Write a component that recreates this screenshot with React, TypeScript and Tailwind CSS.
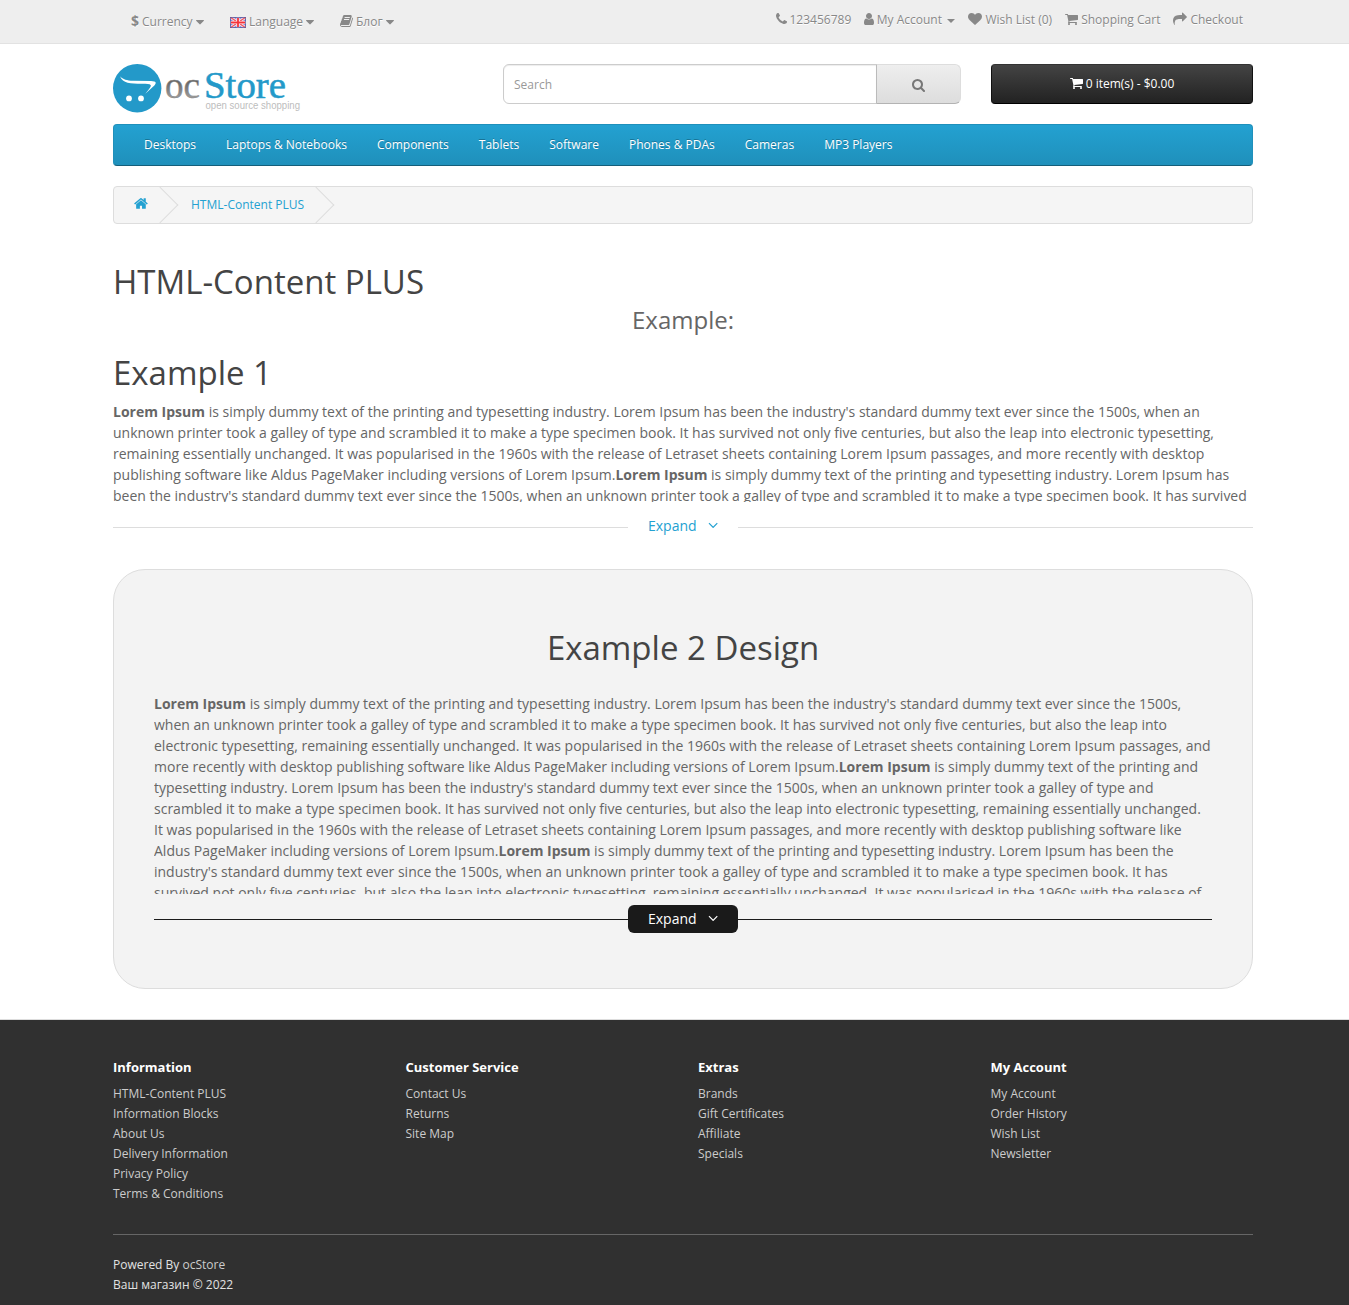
import React from "react";

const ICONS = {
  caret: { w: 1024, d: "M1408 704q0 26-19 45l-448 448q-19 19-45 19t-45-19l-448-448q-19-19-19-45t19-45 45-19h896q26 0 45 19t19 45z" },
  book: { w: 1664, d: "M1703 478q40 57 18 129l-275 906q-19 64-76.5 107.5t-122.5 43.5h-923q-77 0-148.5-53.5t-99.5-131.5q-24-67-2-127 0-4 3-27t4-37q1-8-3-21.5t-3-19.5q2-11 8-21t16.5-23.5 16.5-23.5q23-38 45-91.5t30-91.5q3-10 .5-30t-.5-28q3-11 17-28t17-23q21-36 42-92t25-90q1-9-2.5-32t.5-28q4-13 22-30.5t22-22.5q19-26 42.5-84.5t27.5-96.5q1-8-3-25.5t-2-26.5q2-8 9-18t18-23 17-21q8-12 16.5-30.5t15-35 16-36 19.5-32 26.5-23.5 36-11.5 47.5 5.5l-1 3q38-9 51-9h761q74 0 114 56t18 130l-274 906q-36 119-71.5 153.5t-128.5 34.5h-869q-27 0-38 15-11 16-1 43 24 70 144 70h923q29 0 56-15.5t35-41.5l300-987q7-22 5-57 38 15 59 43zm-1064 2q-4 13 2 22.5t20 9.5h608q13 0 25.5-9.5t16.5-22.5l21-64q4-13-2-22.5t-20-9.5h-608q-13 0-25.5 9.5t-16.5 22.5zm-83 256q-4 13 2 22.5t20 9.5h608q13 0 25.5-9.5t16.5-22.5l21-64q4-13-2-22.5t-20-9.5h-608q-13 0-25.5 9.5t-16.5 22.5z" },
  phone: { w: 1408, d: "M1600 1240q0 27-10 70.5t-21 68.5q-21 50-122 106-94 51-186 51-27 0-53-3.5t-57.5-12.5-47-14.5-55.5-20.5-49-18q-98-35-175-83-127-79-264-216t-216-264q-48-77-83-175-3-9-18-49t-20.5-55.5-14.5-47-12.5-57.5-3.5-53q0-92 51-186 56-101 106-122 25-11 68.5-21t70.5-10q14 0 21 3 18 6 53 76 11 19 30 54t35 63.5 31 53.5q3 4 17.5 25t21.5 35.5 7 28.5q0 20-28.5 50t-62 55-62 53-28.5 46q0 9 5 22.5t8.5 20.5 14 24 11.5 19q76 137 174 235t235 174q2 1 19 11.5t24 14 20.5 8.5 22.5 5q18 0 46-28.5t53-62 55-62 50-28.5q14 0 28.5 7t35.5 21.5 25 17.5q25 15 53.5 31t63.5 35 54 30q70 35 76 53 3 7 3 21z" },
  user: { w: 1280, d: "M1536 1399q0 109-62.5 187t-150.5 78h-854q-88 0-150.5-78t-62.5-187q0-85 8.5-160.5t31.5-152 58.5-131 94-89 134.5-34.5q131 128 313 128t313-128q76 0 134.5 34.5t94 89 58.5 131 31.5 152 8.5 160.5zm-256-887q0 159-112.5 271.5t-271.5 112.5-271.5-112.5-112.5-271.5 112.5-271.5 271.5-112.5 271.5 112.5 112.5 271.5z" },
  heart: { w: 1792, d: "M896 1664q-26 0-44-18l-624-602q-10-8-27.5-26t-55.5-65.5-68-97.5-53.5-121-23.5-138q0-220 127-344t351-124q62 0 126.5 21.5t120 58 95.5 68.5 76 68q36-36 76-68t95.5-68.5 120-58 126.5-21.5q224 0 351 124t127 344q0 221-229 450l-623 600q-18 18-44 18z" },
  cart: { w: 1664, d: "M704 1536q0 52-38 90t-90 38-90-38-38-90 38-90 90-38 90 38 38 90zm896 0q0 52-38 90t-90 38-90-38-38-90 38-90 90-38 90 38 38 90zm128-1088v512q0 24-16.5 42.5t-40.5 21.5l-1044 122q13 60 13 70 0 16-24 64h920q26 0 45 19t19 45-19 45-45 19h-1024q-26 0-45-19t-19-45q0-11 8-31.5t16-36 21.5-40 15.5-29.5l-177-823h-204q-26 0-45-19t-19-45 19-45 45-19h256q16 0 28.5 6.5t19.5 15.5 13 24.5 8 26 5.5 29.5 4.5 26h1201q26 0 45 19t19 45z" },
  share: { w: 1792, d: "M1792 640q0 26-19 45l-512 512q-19 19-45 19t-45-19-19-45v-256h-224q-98 0-175.5 6t-154 21.5-133 42.5-105.5 69.5-80 101-48.5 138.5-17.5 181q0 55 5 123 0 6 2.5 23.5t2.5 26.5q0 15-8.5 25t-23.5 10q-16 0-28-17-7-9-13-22t-13.5-30-10.5-24q-127-285-127-451 0-199 53-333 162-403 875-403h224v-256q0-26 19-45t45-19 45 19l512 512q19 19 19 45z" },
  search: { w: 1664, d: "M1216 832q0-185-131.5-316.5t-316.5-131.5-316.5 131.5-131.5 316.5 131.5 316.5 316.5 131.5 316.5-131.5 131.5-316.5zm512 832q0 52-38 90t-90 38q-54 0-90-38l-343-342q-179 124-399 124-143 0-273.5-55.5t-225-150-150-225-55.5-273.5 55.5-273.5 150-225 225-150 273.5-55.5 273.5 55.5 225 150 150 225 55.5 273.5q0 220-124 399l343 343q37 37 37 90z" },
  home: { w: 1664, d: "M1472 992v480q0 26-19 45t-45 19h-384v-384h-256v384h-384q-26 0-45-19t-19-45v-480q0-1 .5-3t.5-3l575-474 575 474q1 2 1 6zm223-69l-62 74q-8 9-21 11h-3q-13 0-21-7l-692-577-692 577q-12 8-24 7-13-2-21-11l-62-74q-8-10-7-23.5t11-21.5l719-599q32-26 76-26t76 26l244 204v-195q0-14 9-23t23-9h192q14 0 23 9t9 23v408l219 182q10 8 11 21.5t-7 23.5z" },
  angle: { w: 1152, d: "M1395 736q0 13-10 23l-466 466q-10 10-23 10t-23-10l-466-466q-10-10-10-23t10-23l50-50q10-10 23-10t23 10l393 393 393-393q10-10 23-10t23 10l50 50q10 10 10 23z" },
};

function Icon({ name, className = "", size = 14 }: { name: keyof typeof ICONS; className?: string; size?: number }) {
  const { w, d } = ICONS[name];
  return (
    <svg
      viewBox={`${(1792 - w) / 2} 0 ${w} 1792`}
      width={(w * size) / 1792}
      height={size}
      className={`shrink-0 overflow-visible ${className}`}
      fill="currentColor"
    >
      <path d={d} />
    </svg>
  );
}

function Flag() {
  return (
    <svg width="16" height="11" viewBox="0 0 16 11" className="shrink-0">
      <rect width="16" height="11" fill="#8d92d6" />
      <path d="M0 0L16 11M16 0L0 11" stroke="#f4e6ee" strokeWidth="3" />
      <path d="M0 0L16 11M16 0L0 11" stroke="#f0555e" strokeWidth="1.3" />
      <path d="M8 0V11M0 5.5H16" stroke="#fff" strokeWidth="3" />
      <path d="M8 1V10M1 5.5H15" stroke="#f5333a" strokeWidth="1.8" />
      <rect x=".5" y=".5" width="15" height="10" fill="none" stroke="#54549a" strokeOpacity=".75" />
    </svg>
  );
}

function Logo() {
  return (
    <svg width="190" height="50" viewBox="0 0 190 50">
      <defs>
        <linearGradient id="oc" x1="0" y1="0" x2="0" y2="1">
          <stop offset=".4" stopColor="#666" />
          <stop offset=".9" stopColor="#a9a9a9" />
        </linearGradient>
      </defs>
      <circle cx="24.2" cy="24.2" r="24.2" fill="#2399c9" />
      <path d="M7 12.3C10 15.6 14 16.6 20 16.8L38 17C43.4 17.2 43.6 18.8 41.4 21.4L32.3 29.8C36.5 24.5 38.6 22 37.6 20.9C36.8 20 34 19.8 29 19.8C17 19.8 10 19.5 7 12.3Z" fill="#fff" />
      <circle cx="16" cy="34.4" r="2.9" fill="#fff" />
      <circle cx="28" cy="34.4" r="2.9" fill="#fff" />
      <text x="52" y="34" fontFamily="Liberation Serif, serif" fontSize="37" textLength="35" lengthAdjust="spacingAndGlyphs" fill="url(#oc)" stroke="#888" strokeWidth=".4">oc</text>
      <text x="91" y="34" fontFamily="Liberation Serif, serif" fontSize="37" textLength="82" lengthAdjust="spacingAndGlyphs" fill="#2399c9" stroke="#2399c9" strokeWidth=".5">Store</text>
      <text x="92.5" y="44.5" fontFamily="Liberation Sans, sans-serif" fontSize="10" textLength="94.5" lengthAdjust="spacingAndGlyphs" fill="#bdbdbd">open source shopping</text>
    </svg>
  );
}

const NAV = ["Desktops", "Laptops & Notebooks", "Components", "Tablets", "Software", "Phones & PDAs", "Cameras", "MP3 Players"];

const FOOTER = [
  { title: "Information", links: ["HTML-Content PLUS", "Information Blocks", "About Us", "Delivery Information", "Privacy Policy", "Terms & Conditions"] },
  { title: "Customer Service", links: ["Contact Us", "Returns", "Site Map"] },
  { title: "Extras", links: ["Brands", "Gift Certificates", "Affiliate", "Specials"] },
  { title: "My Account", links: ["My Account", "Order History", "Wish List", "Newsletter"] },
];

function Lorem({ repeat }: { repeat: number }) {
  return (
    <>
      {Array.from({ length: repeat }, (_, i) => (
        <React.Fragment key={i}>
          <b className="font-bold">Lorem Ipsum</b> is simply dummy text of the printing and typesetting industry. Lorem Ipsum has been the industry's standard dummy text ever since the 1500s, when an unknown printer took a galley of type and scrambled it to make a type specimen book. It has survived not only five centuries, but also the leap into electronic typesetting, remaining essentially unchanged. It was popularised in the 1960s with the release of Letraset sheets containing Lorem Ipsum passages, and more recently with desktop publishing software like Aldus PageMaker including versions of Lorem Ipsum.
        </React.Fragment>
      ))}
    </>
  );
}

function Crumb({ children, className }: { children: React.ReactNode; className: string }) {
  return (
    <li className={`relative flex h-9 items-center whitespace-nowrap ${className}`}>
      {children}
      <span className="absolute top-[5px] right-0 size-[26px] rotate-[-45deg] border-r border-b border-[#ddd]" />
    </li>
  );
}

export default function App() {
  return (
    <div className="h-[1305px] w-[1349px] overflow-hidden bg-white font-['Open_Sans',sans-serif] text-[12px] leading-5 text-[#666]">
      <div className="h-11 border-b border-[#e2e2e2] bg-[#eee] text-[#888] [text-shadow:0_1px_0_#fff]">
        <div className="ml-[113px] flex w-[1140px] items-start justify-between pr-[10px] pl-[18px]">
          <div className="flex pt-3">
            <div className="flex h-5 w-[99px] items-center">
              <b className="-mt-[2px] w-[11px] text-[14px] font-bold">$</b>Currency
              <Icon name="caret" className="-mt-px ml-[3px]" />
            </div>
            <div className="flex h-5 w-[110px] items-center">
              <Flag />
              <span className="ml-[3px]">Language</span>
              <Icon name="caret" className="-mt-px ml-[3px]" />
            </div>
            <div className="flex h-5 items-center">
              <Icon name="book" className="-mt-[2px]" />
              <span className="ml-[3px]">Блог</span>
              <Icon name="caret" className="-mt-px ml-[3px]" />
            </div>
          </div>
          <div className="flex gap-[13px] pt-[10px]">
            <span className="flex h-5 items-center gap-[2.5px]"><Icon name="phone" className="-mt-[2px]" />123456789</span>
            <span className="flex h-5 items-center gap-[2.5px]">
              <Icon name="user" className="-mt-[2px]" />My Account
              <span className="mt-[2px] ml-[3px] border-x-4 border-t-4 border-x-transparent border-t-[#888]" />
            </span>
            <span className="flex h-5 items-center gap-[3px]"><Icon name="heart" className="-mt-[2px]" />Wish List (0)</span>
            <span className="flex h-5 items-center gap-[3px]"><Icon name="cart" className="-mt-[2px]" />Shopping Cart</span>
            <span className="flex h-5 items-center gap-[3px]"><Icon name="share" className="-mt-[2px]" />Checkout</span>
          </div>
        </div>
      </div>

      <div className="ml-[113px] w-[1140px]">
        <header className="flex h-20 pt-5">
          <div className="w-[390px]"><Logo /></div>
          <div className="flex h-10 w-[458px]">
            <div className="flex w-[374px] items-center rounded-l-md border border-[#ccc] px-[10px] pt-[2px] text-[#999] shadow-[inset_0_1px_1px_rgba(0,0,0,0.075)]">Search</div>
            <div className="-ml-px flex w-[85px] items-center justify-center rounded-r-md border border-[#ddd] border-b-[#b3b3b3] border-l-[#bbb] bg-linear-to-b from-[#eee] to-[#ddd] pt-[2px] pr-px text-[#777]">
              <Icon name="search" />
            </div>
          </div>
          <div className="ml-[30px] flex h-10 w-[262px] items-center justify-center gap-[3px] rounded border border-[#111] border-t-[#333] border-b-black bg-linear-to-b from-[#444] to-[#222] text-white">
            <Icon name="cart" className="-mt-[2px]" />0 item(s) - $0.00
          </div>
        </header>

        <nav className="flex h-[42px] rounded border border-[#1f90bb] border-b-[#145e7a] bg-linear-to-b from-[#23a1d1] to-[#1f90bb] pl-[15px] text-white">
          {NAV.map((n) => (
            <a key={n} className="px-[15px] pt-[10px] [text-shadow:0_-1px_0_rgba(0,0,0,0.25)]">{n}</a>
          ))}
        </nav>

        <ul className="mt-5 flex h-[38px] overflow-hidden rounded border border-[#ddd] bg-[#f5f5f5] text-[#23a1d1]">
          <Crumb className="w-[59px] pl-5"><Icon name="home" size={15} className="mb-[3px]" /></Crumb>
          <Crumb className="w-[156px] pl-[18px]">HTML-Content PLUS</Crumb>
        </ul>

        <main className="text-[14px] leading-[21px]">
          <h1 className="mt-[40px] text-[33px] leading-9 text-[#444]">HTML-Content PLUS</h1>
          <h2 className="mt-[5px] text-center text-[24px] leading-[30px]">Example:</h2>
          <h1 className="mt-5 text-[33px] leading-9 text-[#444]">Example 1</h1>
          <div className="mt-[10px] h-[101px] overflow-hidden"><Lorem repeat={2} /></div>
          <div className="mt-[10px] flex h-7 items-center text-[#23a1d1]">
            <span className="mt-[3px] h-px flex-1 bg-[#ddd]" />
            <span className="-mt-[2px] flex w-[110px] items-center pl-5">Expand<Icon name="angle" size={16} className="ml-[11px]" /></span>
            <span className="mt-[3px] h-px flex-1 bg-[#ddd]" />
          </div>

          <section className="mt-[29px] h-[420px] rounded-[32px] border border-[#ddd] bg-[#f3f3f3] px-10 pt-[60px]">
            <h1 className="text-center text-[33px] leading-9 text-[#444]">Example 2 Design</h1>
            <div className="mt-[27px] h-[201px] overflow-hidden"><Lorem repeat={3} /></div>
            <div className="mt-[11px] flex h-7 items-center text-white">
              <span className="h-px flex-1 bg-[#1a1a1a]" />
              <span className="flex h-7 w-[110px] items-center rounded-md bg-[#1a1a1a] pb-[2px] pl-5">Expand<Icon name="angle" size={16} className="ml-[11px]" /></span>
              <span className="h-px flex-1 bg-[#1a1a1a]" />
            </div>
          </section>
        </main>
      </div>

      <footer className="mt-[30px] h-[286px] border-t border-[#ddd] bg-[#303030] text-[#e2e2e2]">
        <div className="ml-[113px] w-[1140px]">
          <div className="flex h-[215px] border-b border-[#666] pt-[38px]">
            {FOOTER.map((c) => (
              <div key={c.title} className="w-[292.5px] shrink-0">
                <h5 className="text-[13px] leading-[18px] font-bold text-white">{c.title}</h5>
                <ul className="mt-[8px] text-[#ccc]">
                  {c.links.map((l) => <li key={l}>{l}</li>)}
                </ul>
              </div>
            ))}
          </div>
          <p className="mt-5">Powered By <span className="text-[#ccc]">ocStore</span><br />Ваш магазин © 2022</p>
        </div>
      </footer>
    </div>
  );
}
